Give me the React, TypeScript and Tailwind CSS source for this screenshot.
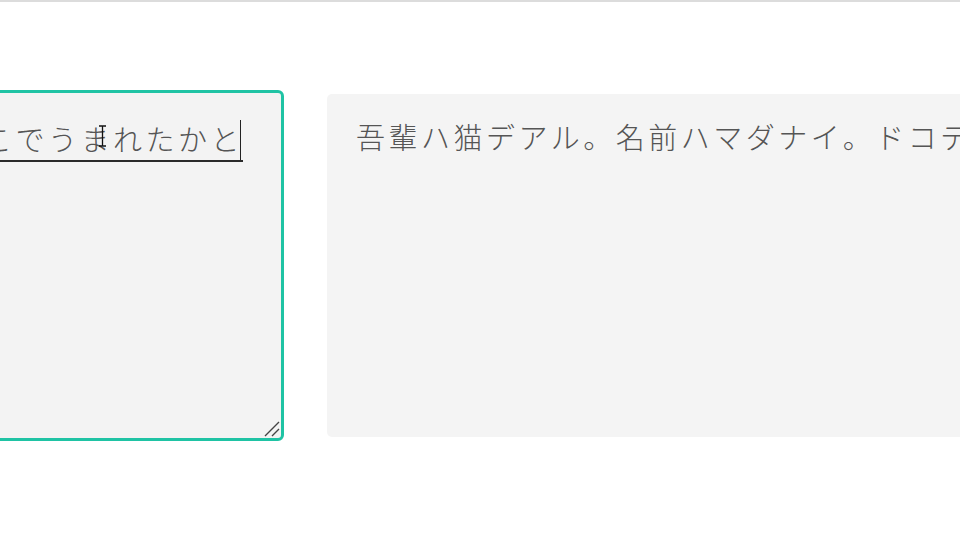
import React from "react";

const JP = "font-['Noto_Sans_CJK_JP','Noto_Sans',sans-serif]";

export default function App() {
  return (
    <div className={`relative w-[960px] h-[540px] overflow-hidden bg-white ${JP}`}>
      {/* top rule */}
      <div className="h-[2px] bg-[#dcdcdc]" />

      <div className="flex items-start pt-[88px]">
        {/* input (composing) */}
        <div className="-ml-[40px] w-[324px] h-[351px] shrink-0 rounded-[6px] border-[3px] border-[#1fc3a4] bg-[#f3f3f3] pl-[20px] pt-[27px] relative">
          <div className="whitespace-nowrap text-[29px] leading-[36px] tracking-[3.5px] font-light text-[#555]">
            <span className="border-b-[2px] border-[#2a2a2a] pb-[1px]">こでうまれたかと</span>
            <span className="inline-block w-[1px] h-[40px] bg-[#222] align-[-9px] -ml-[3px]" />
          </div>
          {/* resize grip */}
          <svg className="absolute right-[1px] bottom-[1px]" width="17" height="17" viewBox="0 0 17 17">
            <path d="M2 16L16 2M9 16L16 9" stroke="#444" strokeWidth="1.4" fill="none" />
          </svg>
        </div>

        {/* converted output */}
        <div className="ml-[43px] mt-[4px] w-[700px] h-[343px] shrink-0 rounded-[5px] bg-[#f4f4f4] pl-[29px] pt-[24px]">
          <div className="whitespace-nowrap text-[29px] leading-[36px] tracking-[3.5px] font-light text-[#555]">
            吾輩ハ猫デアル。名前ハマダナイ。ドコデ生レタカトント見当ガツカヌ。
          </div>
        </div>
      </div>

      {/* mouse I-beam */}
      <svg className="absolute left-[98px] top-[125px]" width="9" height="22" viewBox="0 0 9 22">
        <path d="M1 1h3l0.5 0.5L5 1h3M4.5 1.5v19M1 21h3l0.5-0.5L5 21h3" stroke="#111" strokeWidth="1.3" fill="none" />
      </svg>
    </div>
  );
}
